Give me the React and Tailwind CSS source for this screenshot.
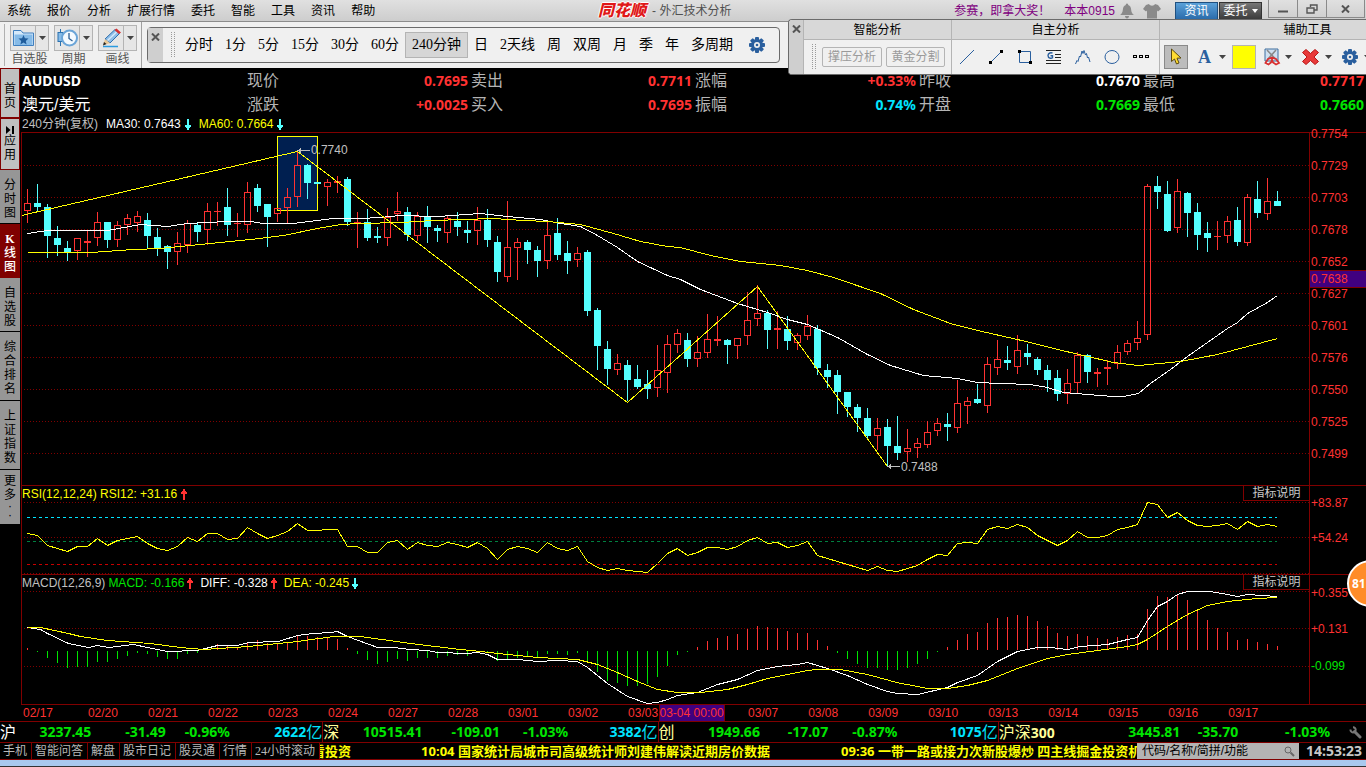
const MENU = ["系统", "报价", "分析", "扩展行情", "委托", "智能", "工具", "资讯", "帮助"];

const PERIODS = [
  "分时", "1分", "5分", "15分", "30分", "60分", "240分钟", "日",
  "2天线", "周", "双周", "月", "季", "年", "多周期",
];

const SIDE_TABS = [
  { label: "首页", className: "h-[50px] bg-[#c0c0c0] pt-1.5 text-black border border-[#800000]" },
  { label: "应用", icon: true, className: "h-[52px] bg-[#c0c0c0] text-black border border-[#800000]" },
  { label: "分时图", className: "h-[54px] bg-[#969696] pt-1 text-black border-b border-black" },
  { label: "K线图", className: "h-[54px] bg-[#800000] pt-1 text-white font-medium" },
  { label: "自选股", className: "h-[54px] bg-[#969696] pt-1 text-black border-b border-black" },
  { label: "综合排名", className: "h-[69px] bg-[#969696] pt-1 text-black border-b border-black" },
  { label: "上证指数", className: "h-[69px] bg-[#969696] pt-1 text-black border-b border-black" },
  { label: "更多··", className: "h-[54px] bg-[#969696] text-black" },
];

const QUOTES = [
  ["现价", "0.7695", "text-[#ff3232]"],
  ["卖出", "0.7711", "text-[#ff3232]"],
  ["涨幅", "+0.33%", "text-[#ff3232]"],
  ["昨收", "0.7670", "text-white"],
  ["最高", "0.7717", "text-[#ff3232]"],
  ["涨跌", "+0.0025", "text-[#ff3232]"],
  ["买入", "0.7695", "text-[#ff3232]"],
  ["振幅", "0.74%", "text-[#00e4ff]"],
  ["开盘", "0.7669", "text-[#00e600]"],
  ["最低", "0.7660", "text-[#00e600]"],
];

// [up, high, body top, body bottom, low], one entry every 10px
const CANDLES = [
  [1, 189, 203, 211, 223], [0, 184, 203, 207, 211], [0, 204, 207, 236, 258], [0, 226, 238, 245, 256],
  [0, 241, 248, 253, 261], [1, 238, 238, 251, 260], [1, 231, 241, 243, 257], [1, 212, 222, 238, 246],
  [0, 222, 222, 240, 248], [1, 221, 225, 240, 247], [1, 214, 218, 225, 235], [1, 211, 216, 223, 232],
  [0, 213, 220, 236, 248], [0, 228, 237, 248, 256], [0, 245, 246, 252, 269], [1, 232, 243, 252, 265],
  [1, 220, 223, 245, 253], [0, 222, 225, 232, 242], [1, 203, 211, 230, 245], [1, 202, 211, 212, 226],
  [0, 188, 207, 225, 236], [1, 213, 223, 224, 237], [1, 182, 192, 225, 233], [0, 184, 188, 206, 212],
  [0, 204, 204, 217, 247], [1, 208, 208, 214, 222], [1, 188, 197, 208, 223], [1, 150, 165, 197, 207],
  [0, 164, 165, 183, 199], [0, 182, 182, 184, 184], [1, 179, 182, 187, 206], [1, 176, 181, 183, 193],
  [0, 177, 179, 222, 226], [1, 212, 222, 223, 248], [0, 209, 222, 238, 241], [0, 227, 236, 238, 243],
  [1, 208, 217, 238, 246], [1, 192, 211, 214, 221], [0, 207, 212, 235, 241], [1, 212, 216, 236, 241],
  [0, 206, 217, 227, 243], [0, 225, 228, 231, 242], [1, 216, 218, 233, 243], [0, 212, 221, 227, 236],
  [0, 221, 230, 233, 243], [1, 207, 220, 231, 245], [0, 209, 220, 240, 247], [0, 236, 242, 272, 282],
  [1, 201, 247, 277, 282], [1, 238, 242, 248, 280], [0, 240, 242, 250, 264], [0, 246, 250, 261, 277],
  [1, 220, 235, 261, 269], [0, 218, 233, 255, 260], [0, 241, 253, 261, 274], [1, 247, 253, 260, 267],
  [0, 250, 252, 311, 316], [0, 308, 310, 346, 370], [0, 341, 349, 369, 385], [1, 354, 363, 370, 375],
  [0, 360, 365, 380, 401], [0, 365, 379, 387, 389], [0, 370, 384, 389, 399], [1, 345, 370, 388, 397],
  [1, 335, 344, 373, 393], [1, 329, 333, 345, 353], [0, 333, 340, 359, 367], [1, 336, 352, 359, 367],
  [1, 314, 339, 353, 358], [1, 316, 339, 341, 346], [0, 339, 340, 345, 364], [1, 338, 338, 346, 359],
  [1, 292, 320, 336, 345], [1, 285, 313, 319, 326], [0, 310, 313, 330, 349], [1, 311, 328, 330, 349],
  [0, 316, 329, 341, 350], [1, 333, 335, 343, 350], [1, 315, 326, 336, 340], [0, 325, 329, 368, 375],
  [0, 364, 370, 377, 388], [0, 370, 375, 392, 414], [0, 392, 392, 407, 417], [0, 404, 407, 418, 432],
  [0, 408, 418, 436, 440], [1, 418, 428, 436, 450], [0, 419, 427, 446, 466], [0, 416, 446, 453, 460],
  [1, 429, 448, 452, 462], [1, 438, 443, 448, 458], [1, 421, 432, 445, 448], [1, 418, 423, 431, 436],
  [0, 413, 424, 427, 441], [1, 380, 403, 428, 433], [1, 397, 401, 406, 424], [0, 384, 399, 403, 404],
  [1, 357, 364, 406, 413], [1, 340, 359, 368, 375], [0, 346, 360, 363, 370], [1, 335, 350, 367, 374],
  [0, 344, 353, 357, 365], [0, 357, 359, 370, 375], [0, 365, 370, 380, 392], [0, 370, 378, 394, 401],
  [1, 369, 383, 394, 404], [1, 352, 355, 383, 393], [0, 354, 355, 372, 383], [1, 368, 372, 374, 387],
  [1, 360, 367, 369, 385], [1, 345, 352, 364, 369], [1, 340, 343, 352, 355], [1, 321, 338, 343, 350],
  [1, 184, 186, 335, 340], [0, 176, 186, 192, 209], [0, 181, 194, 231, 232], [1, 179, 191, 228, 233],
  [0, 192, 193, 213, 237], [0, 203, 212, 235, 250], [0, 222, 233, 238, 252], [1, 221, 236, 237, 250],
  [1, 216, 221, 236, 243], [0, 207, 220, 242, 246], [1, 194, 197, 243, 246], [0, 181, 199, 213, 218],
  [1, 178, 201, 214, 220], [0, 191, 201, 206, 206],
];

const RSI = [
  533, 535, 545, 548, 551, 546, 546, 538, 545, 540, 538, 536, 543, 548, 550, 546, 537, 541, 533, 533, 539, 538,
  527, 533, 538, 535, 531, 523, 530, 530, 529, 529, 546, 546, 552, 552, 542, 540, 549, 542, 545, 546, 542, 544,
  547, 542, 548, 559, 549, 546, 548, 552, 542, 548, 550, 546, 561, 567, 570, 568, 570, 571, 572, 563, 553, 548,
  555, 552, 547, 547, 549, 546, 540, 537, 543, 542, 547, 545, 541, 555, 558, 561, 564, 567, 570, 566, 570, 571,
  568, 565, 559, 554, 555, 543, 542, 543, 529, 526, 528, 524, 527, 535, 540, 545, 540, 531, 537, 537, 535, 529,
  527, 524, 502, 504, 517, 512, 520, 525, 526, 525, 523, 529, 521, 526, 524, 526,
];

const MACD = [
  2, -1, -7, -12, -17, -16, -16, -11, -11, -8, -5, -2, -3, -6, -8, -8, -3, -2, 2, 6, 4, 3, 8, 10, 7, 7, 7, 14,
  14, 13, 13, 11, 2, -3, -9, -13, -11, -8, -10, -7, -7, -7, -5, -4, -5, -1, -2, -10, -8, -7, -6, -6, -3, -3, -4,
  -2, -11, -21, -30, -32, -35, -35, -33, -26, -15, -4, -1, 3, 9, 12, 14, 16, 21, 24, 23, 22, 19, 17, 17, 10, 4,
  -2, -8, -13, -17, -17, -19, -19, -17, -13, -8, -1, 3, 10, 16, 18, 27, 32, 33, 35, 34, 29, 24, 17, 14, 16, 14,
  12, 11, 13, 15, 16, 41, 54, 53, 55, 50, 40, 30, 22, 18, 10, 11, 8, 6, 4,
];

const MA30 =
  "27,233 47,230 107,230 140,224 167,226 187,223 227,221 250,221 263,223 293,223 333,218 360,218 380,217 400,215 437,216 480,213 507,216 540,219 560,223 580,226 597,235 617,247 637,261 667,275 680,279 700,289 737,303 767,312 787,319 807,324 837,337 867,354 890,365 923,375 957,378 977,382 1000,383 1030,384 1047,387 1063,392 1087,394 1113,396 1123,396 1138,393 1150,383 1170,369 1187,356 1227,328 1237,322 1247,313 1267,302 1277,295";
const MA60 =
  "27,252 90,252 133,249 160,248 200,244 250,239 283,235 317,228 340,224 360,223 400,222 433,220 493,218 523,220 547,221 580,224 613,233 640,241 667,246 680,247 710,255 740,261 780,265 807,270 833,277 880,293 913,309 950,323 977,330 1017,339 1070,352 1113,362 1138,365 1180,361 1217,354 1247,346 1277,338";
const DIFF =
  "27,627 40,629 47,633 68,643 88,647 97,645 108,647 133,644 147,647 167,651 197,650 217,645 237,645 248,642 278,641 297,635 313,633 330,632 337,631 347,636 377,647 393,647 410,649 427,650 437,652 467,653 477,652 487,654 497,659 517,659 537,661 557,660 577,661 587,667 607,683 627,696 647,703 657,702 667,699 677,695 697,692 717,684 737,679 757,670 777,666 797,664 807,662 827,668 847,675 867,684 887,691 897,693 917,694 947,687 957,682 977,675 997,661 1017,651 1027,649 1037,647 1050,647 1067,649 1080,646 1107,644 1127,639 1137,637 1147,620 1157,606 1167,601 1177,594 1187,591 1210,591 1227,594 1237,596 1247,594 1277,596";
const DEA =
  "27,627 40,627 68,633 80,636 107,640 150,643 180,647 203,649 248,646 297,641 333,636 360,636 410,643 460,649 480,651 507,654 537,657 577,659 597,664 617,672 637,681 657,689 677,692 700,692 727,689 747,684 767,678 787,674 807,670 817,669 840,669 867,674 900,683 907,684 927,688 947,688 967,685 987,680 1017,668 1047,658 1067,654 1097,650 1127,646 1137,644 1147,639 1167,626 1187,614 1207,605 1227,601 1257,598 1277,597";

const PRICE_AXIS = [
  "0.7754", "0.7729", "0.7703", "0.7678", "0.7652", "0.7627",
  "0.7601", "0.7576", "0.7550", "0.7525", "0.7499",
];

// the gap is the day that sits behind the cursor date
const DATES = [
  "02/20", "02/21", "02/22", "02/23", "02/24", "02/27", "02/28", "03/01", "03/02", "03/03",
  "", "03/07", "03/08", "03/09", "03/10", "03/13", "03/14", "03/15", "03/16", "03/17",
];

const INDEXES = [
  {
    name: "沪", color: "text-white", box: "flex-[323] border-r",
    cells: [["3237.45", "flex-[91]"], ["-31.49", "flex-[74]"], ["-0.96%", "flex-[64]"]],
    amount: "2622", amountBox: "flex-[92]",
  },
  {
    name: "深", color: "text-[#ffff99]", box: "flex-[335] border-r",
    cells: [["10515.41", "flex-[99]"], ["-109.01", "flex-[77]"], ["-1.03%", "flex-[68]"]],
    amount: "3382", amountBox: "flex-[89]",
  },
  {
    name: "创", color: "text-[#ffff99]", box: "flex-[340] border-r",
    cells: [["1949.66", "flex-[101]"], ["-17.07", "flex-[68]"], ["-0.87%", "flex-[69]"]],
    amount: "1075", amountBox: "flex-[100]",
  },
  {
    name: "沪深300", color: "text-[#ffff99]", box: "flex-[332]",
    cells: [["3445.81", "flex-[182]"], ["-35.70", "flex-[58]"], ["-1.03%", "flex-[92]"]],
  },
];

const BOTTOM_LINKS = ["手机", "智能问答", "解盘", "股市日记", "股灵通", "行情", "24小时滚动"];

const xAt = (i) => 27 + i * 10;

function Arrow({ up }) {
  return (
    <svg width="6" height="11" viewBox="0 0 6 11" className="shrink-0" shapeRendering="crispEdges">
      {up ? (
        <path d="M2 11V5H0V3H1V2H2V0H4V2H5V3H6V5H4V11Z" fill="#ff3232" />
      ) : (
        <path d="M2 0V6H0V8H1V9H2V11H4V9H5V8H6V6H4V0Z" fill="#54ffff" />
      )}
    </svg>
  );
}

function Gear() {
  return (
    <svg width="16" height="16" viewBox="0 0 16 16" className="shrink-0">
      <g fill="#2a5f9e">
        <circle cx="8" cy="8" r="6" />
        {[0, 45, 90, 135].map((a) => (
          <rect key={a} x="6" y="0" width="4" height="16" rx="1" transform={`rotate(${a} 8 8)`} />
        ))}
      </g>
      <circle cx="8" cy="8" r="3" fill="#f0f0f0" />
      <circle cx="8" cy="8" r="1.3" fill="#2a5f9e" />
    </svg>
  );
}

function Caret() {
  return (
    <svg width="7" height="4" viewBox="0 0 7 4" className="shrink-0">
      <path d="M0 0H7L3.5 4Z" fill="#444" />
    </svg>
  );
}

function CloseMark() {
  return (
    <svg width="9" height="8" viewBox="0 0 9 8">
      <path d="M1 0.5L8 7.5M8 0.5L1 7.5" stroke="#555" strokeWidth="2" />
    </svg>
  );
}

function Handle() {
  return (
    <svg width="4" height="26" viewBox="0 0 4 26" className="shrink-0" shapeRendering="crispEdges">
      <path d="M0.5 0V26M3.5 0V26" stroke="#9a9a9a" strokeDasharray="1 1" />
    </svg>
  );
}

function MenuBar() {
  return (
    <header className="flex h-[22px] items-center border-b border-[#8c8c8c] bg-linear-to-b from-[#e0e0e0] to-[#cdcdcd] pl-[7px] text-xs text-black">
      <nav className="flex gap-4">
        {MENU.map((m) => (
          <button key={m} type="button">{m}</button>
        ))}
      </nav>
      <div className="mx-auto flex items-center gap-1 text-[#505050]">
        <span className="text-base leading-5 font-black text-[#e01818] italic [text-shadow:1px_0_#fff,-1px_0_#fff,0_1px_#fff,0_-1px_#fff]">
          同花顺
        </span>
        <span className="ml-0.5">- 外汇技术分析</span>
      </div>
      <div className="flex h-full items-center text-[#800080]">
        <a href="#match">参赛，即拿大奖！</a>
        <a href="#user" className="ml-3.5">本本0915</a>
        <button type="button" aria-label="消息" className="ml-1">
          <svg width="16" height="16" viewBox="0 0 16 16" fill="#8a8a8a">
            <path d="M8 0.5C9 0.5 9.2 1.4 9.2 2C11.3 2.6 12 4.5 12.2 7C12.4 9.6 13.5 11 15 12H1C2.5 11 3.6 9.6 3.8 7C4 4.5 4.7 2.6 6.8 2C6.8 1.4 7 0.5 8 0.5ZM6 13H10C10 16.3 6 16.3 6 13Z" />
          </svg>
        </button>
        <button type="button" aria-label="皮肤" className="mr-3.5 ml-2">
          <svg width="18" height="16" viewBox="0 0 18 16" fill="#8a8a8a">
            <path d="M6 1C7 3.2 11 3.2 12 1L15 2L18 6L15 8.5L14 7.5V15.5H4V7.5L3 8.5L0 6L3 2Z" />
          </svg>
        </button>
        <button type="button" className="h-[18px] w-[43px] border border-[#1f5080] bg-linear-to-b from-[#5aa0d8] to-[#2b6cab] text-white">
          资讯
        </button>
        <button type="button" className="ml-px flex h-[18px] w-[43px] items-center justify-center gap-1 border border-[#333] bg-linear-to-b from-[#777] to-[#3c3c3c] text-white">
          委托
          <svg width="6" height="4" viewBox="0 0 6 4"><path d="M0 0H6L3 4Z" fill="#fff" /></svg>
        </button>
        <div className="mr-px ml-1.5 flex h-[18px] self-start border border-t-0 border-[#8a8a8a]">
          <button type="button" aria-label="最小化" className="flex w-[29px] items-center justify-center border-r border-[#8a8a8a]">
            <svg width="10" height="8" viewBox="0 0 10 8"><path d="M0 6.5H10" stroke="#555" strokeWidth="2" /></svg>
          </button>
          <button type="button" aria-label="还原" className="flex w-[29px] items-center justify-center border-r border-[#8a8a8a]">
            <svg width="12" height="10" viewBox="0 0 12 10" fill="none" stroke="#555">
              <path d="M4.5 3V1H11V6H8.5M1 4H8V9H1Z" strokeWidth="1.4" />
            </svg>
          </button>
          <button type="button" aria-label="关闭" className="flex w-[37px] items-center justify-center"><CloseMark /></button>
        </div>
      </div>
    </header>
  );
}

function BigTool({ label, children }) {
  return (
    <div className="flex w-[39px] flex-col items-center text-xs leading-4 text-[#555]">
      <div className="flex h-[26px] w-full border border-[#b4b4b4] bg-[#e6e6e6]">
        <button type="button" aria-label={label} className="flex flex-1 items-center justify-center border-r border-[#b4b4b4]">
          {children}
        </button>
        <button type="button" aria-label={`${label}菜单`} className="flex w-3 items-center justify-center"><Caret /></button>
      </div>
      <span>{label}</span>
    </div>
  );
}

function ToolBar() {
  return (
    <div className="flex h-[46px] bg-[#f0f0f0]">
      <div className="flex gap-[5px] border-r border-[#a0a0a0] pt-[3px] pr-1 pl-1">
        <span className="-mt-px mb-0.5 w-px border-r border-[#b0b0b0]" />
        <BigTool label="自选股">
          <svg width="21" height="18" viewBox="0 0 21 18">
            <path d="M0.5 16.5V1.5H8L10 4H20.5V16.5Z" fill="#d5e9fa" stroke="#3f7fbf" />
            <path d="M1.5 5.5H19.5V16H1.5Z" fill="#86bbe8" />
            <path d="M10.5 6L11.9 9.3L15.5 9.6L12.8 11.9L13.6 15.4L10.5 13.5L7.4 15.4L8.2 11.9L5.5 9.6L9.1 9.3Z" fill="#1f5c9c" />
          </svg>
        </BigTool>
        <BigTool label="周期">
          <svg width="21" height="20" viewBox="0 0 21 20">
            <path d="M3.5 1V18" stroke="#2b72b0" />
            <rect x="1" y="4.5" width="5" height="9" fill="#86bbe8" stroke="#2b72b0" />
            <circle cx="12.5" cy="10" r="7.5" fill="#f4faff" stroke="#6ba5d8" strokeWidth="2" />
            <path d="M12 5V10.5L15.5 13" fill="none" stroke="#2b5f95" strokeWidth="1.3" />
          </svg>
        </BigTool>
        <BigTool label="画线">
          <svg width="21" height="20" viewBox="0 0 21 20">
            <path d="M2 18.5H17" stroke="#2b9be0" strokeWidth="1.5" />
            <path d="M4 11L14 1.5L18.5 5.5L9 15Z" fill="#8dbde8" stroke="#2f6fae" />
            <path d="M6.5 12.5L15.5 4" stroke="#d5e9fa" strokeWidth="1.5" />
            <path d="M13.5 2L15.5 0.5L20 4.5L18 6Z" fill="#d83030" />
            <path d="M2 17.5L4 11L9 15Z" fill="#e8c898" />
            <path d="M2 17.5L3 14L5.5 16Z" fill="#222" />
          </svg>
        </BigTool>
      </div>
      <div className="mt-[5px] ml-[5px] flex h-9 w-[633px] rounded-sm border border-[#6b6b6b]">
        <button type="button" aria-label="关闭工具条" className="flex w-[15px] justify-center bg-[#cfcfcf] pt-[5px]"><CloseMark /></button>
        <div className="flex flex-1 items-center pl-2 font-['Liberation_Serif','Noto_Sans_CJK_SC',serif] text-sm text-black">
          <Handle />
          <div className="ml-1 flex items-center">
            {PERIODS.map((p) => (
              <button
                key={p}
                type="button"
                className={
                  p === "240分钟"
                    ? "h-[26px] border border-[#b4b4b4] bg-[#d6d6d6] px-[6px]"
                    : "h-[26px] px-[6px]"
                }
              >
                {p}
              </button>
            ))}
          </div>
          <button type="button" aria-label="设置" className="ml-2.5"><Gear /></button>
        </div>
      </div>
    </div>
  );
}

function DrawTool({ label, children }) {
  return (
    <button type="button" aria-label={label} className="flex w-[29px] shrink-0 justify-center">
      <svg width="16" height="16" viewBox="0 0 16 16" fill="none" stroke="#2a5f9e">
        {children}
      </svg>
    </button>
  );
}

function DrawPanel() {
  return (
    <div className="absolute top-[19px] right-0 flex h-14 w-[578px] overflow-hidden rounded-l-sm border border-r-0 border-[#6b6b6b] bg-[#f0f0f0] text-xs text-black">
      <button type="button" aria-label="关闭画线工具" className="flex w-[15px] shrink-0 justify-center border-r border-[#b4b4b4] bg-[#cfcfcf] pt-[5px]">
        <CloseMark />
      </button>
      <section className="w-[148px] shrink-0 border-r border-[#b4b4b4]">
        <h2 className="h-5 border-b border-[#b4b4b4] bg-[#d8d8d8] text-center leading-5">智能分析</h2>
        <div className="flex h-[34px] items-center gap-1 pl-2">
          <Handle />
          <button type="button" className="ml-0.5 h-5 w-[60px] rounded-xs border border-[#b4b4b4] text-[#9a9a9a]">撑压分析</button>
          <button type="button" className="h-5 w-[59px] rounded-xs border border-[#b4b4b4] text-[#9a9a9a]">黄金分割</button>
        </div>
      </section>
      <section className="w-[208px] shrink-0 border-r border-[#b4b4b4]">
        <h2 className="h-5 border-b border-[#b4b4b4] bg-[#d8d8d8] text-center leading-5">自主分析</h2>
        <div className="flex h-[34px] items-center">
          <DrawTool label="直线"><path d="M1 15L15 1" /></DrawTool>
          <DrawTool label="线段">
            <path d="M2.5 13.5L13.5 2.5" />
            <path d="M1 12H4V15H1ZM12 1H15V4H12Z" fill="#000" stroke="none" />
          </DrawTool>
          <DrawTool label="矩形">
            <path d="M2.5 2.5H13.5V13.5H2.5Z" />
            <path d="M1 1H4V4H1ZM12 12H15V15H12Z" fill="#000" stroke="none" />
          </DrawTool>
          <DrawTool label="黄金线">
            <path d="M0 1.5H15M9 5.5H15M9 8.5H15M0 11.5H15M0 14.5H15" stroke="#222" shapeRendering="crispEdges" />
            <path d="M6.5 4.2C5.5 3.4 2 3.6 2 6.6C2 9.6 5.5 9.6 6.5 8.8V6.8H4.5" strokeWidth="1.4" />
          </DrawTool>
          <DrawTool label="波浪">
            <path d="M0.5 15L2 11.5L3 12.5L4.5 7L5.5 8L7 2L8 4.5L9 1.5L10.5 6L11.5 4.5L12.5 9L13.5 8L15 13" />
          </DrawTool>
          <DrawTool label="圆"><ellipse cx="8" cy="8" rx="7" ry="6.5" /></DrawTool>
          <DrawTool label="更多">
            <path d="M0 6H4V9H0ZM6 6H10V9H6ZM12 6H16V9H12Z" fill="#000" stroke="none" shapeRendering="crispEdges" />
            <path d="M1 7H3V8H1ZM7 7H9V8H7ZM13 7H15V8H13Z" fill="#e8e8e8" stroke="none" shapeRendering="crispEdges" />
          </DrawTool>
        </div>
      </section>
      <section className="w-[295px] shrink-0">
        <h2 className="h-5 border-b border-[#b4b4b4] bg-[#d8d8d8] text-center leading-5">辅助工具</h2>
        <div className="flex h-[34px] items-center pl-1">
          <button type="button" aria-label="选择" className="flex size-6 items-center justify-center border border-[#8a8a8a] bg-[#bcbcbc]">
            <svg width="12" height="18" viewBox="0 0 12 18">
              <path d="M1.5 1V13.5L4.5 11L6.5 16L9 15L7 10.2L11 10Z" fill="#ffdc32" stroke="#5a4a10" />
            </svg>
          </button>
          <button type="button" aria-label="文字" className="ml-2.5 font-['Liberation_Serif',serif] text-lg leading-5 font-bold text-[#2a5f9e]">A</button>
          <span className="ml-2"><Caret /></span>
          <button type="button" aria-label="颜色" className="ml-1.5 size-6 border border-[#b4b4b4] bg-[#ffff00]" />
          <button type="button" aria-label="剪切" className="ml-2">
            <svg width="17" height="18" viewBox="0 0 17 18" fill="none">
              <path d="M1 1H14V13H1Z" fill="#cfe0f0" stroke="#3f6f9f" />
              <path d="M3 2L11.5 11M12 2L4 11" stroke="#888" strokeWidth="1.5" />
              <path d="M8 9.5L4 11L1.5 15L4.5 16.5L7 14.5L8 11.5L9 14.5L12 16.5L15 15L12 11Z" stroke="#d83030" strokeWidth="1.8" />
            </svg>
          </button>
          <span className="ml-1"><Caret /></span>
          <button type="button" aria-label="删除" className="ml-2.5">
            <svg width="17" height="16" viewBox="0 0 17 16">
              <path d="M4 0.5L8.5 4.5L13 0.5L16.5 3.5L12 8L16.5 12.5L13 15.5L8.5 11.5L4 15.5L0.5 12.5L5 8L0.5 3.5Z" fill="#e83a3a" stroke="#b81818" />
            </svg>
          </button>
          <span className="ml-1.5"><Caret /></span>
          <button type="button" aria-label="工具设置" className="ml-2.5"><Gear /></button>
          <span className="ml-1.5"><Caret /></span>
        </div>
      </section>
    </div>
  );
}

function SideBar() {
  return (
    <nav className="w-[21px] shrink-0 bg-black pr-px">
      {SIDE_TABS.map((t) => (
        <button
          key={t.label}
          type="button"
          className={`flex w-full flex-col items-center justify-center text-xs leading-[14px] ${t.className}`}
        >
          {t.icon && (
            <svg width="8" height="8" viewBox="0 0 8 8"><path d="M0 0L4.5 4L0 8ZM6 0H8V8H6Z" /></svg>
          )}
          {[...t.label].map((c, i) => (
            <span
              key={i}
              className={c === "·" ? "leading-[9px]" : c === "K" ? "font-['Liberation_Serif',serif] font-bold" : ""}
            >
              {c}
            </span>
          ))}
        </button>
      ))}
    </nav>
  );
}

function QuoteHeader() {
  const cell = ([label, value, color]) => (
    <div key={label} className="flex justify-between pr-0.5 pl-px">
      <span className="text-base leading-6 text-[#b4b4b4]">{label}</span>
      <span className={`font-['Noto_Sans',sans-serif] text-sm leading-6 font-bold ${color}`}>{value}</span>
    </div>
  );
  return (
    <div className="grid grid-cols-6 pt-px pl-px text-white">
      <div className="font-['Noto_Sans',sans-serif] text-sm leading-6 font-bold">AUDUSD</div>
      {QUOTES.slice(0, 5).map(cell)}
      <div className="text-base leading-6">澳元/美元</div>
      {QUOTES.slice(5).map(cell)}
    </div>
  );
}

function Grid({ rows }) {
  return rows.map((y) => (
    <path key={y} d={`M24 ${y}.5H1309`} stroke="#800000" strokeDasharray="1 2" />
  ));
}

function Line({ points, color }) {
  return <polyline points={points} fill="none" stroke={color} transform="translate(0.5 0.5)" />;
}

function ChartPanel({ box, viewBox, axis, children, overlay }) {
  return (
    <div className={`flex border-t border-[#800000] ${box}`}>
      <div className="relative min-w-0 flex-1 border-r border-l border-[#800000]">
        <svg className="block size-full" viewBox={viewBox} preserveAspectRatio="none" shapeRendering="crispEdges">
          {children}
        </svg>
        {overlay}
      </div>
      <div className="relative w-14 shrink-0 pl-px text-[#ff3232]">{axis}</div>
    </div>
  );
}

function HelpButton() {
  return (
    <button type="button" className="absolute top-0 right-0 h-[15px] w-[66px] border-b border-l border-[#800000] bg-black text-xs leading-[14px] text-[#c8c8c8]">
      指标说明
    </button>
  );
}

function PriceChart() {
  return (
    <ChartPanel
      box="h-[353px]"
      viewBox="22 133 1287 352"
      axis={
        <>
          <div className="-mt-4">
            {PRICE_AXIS.map((p) => (
              <div key={p} className="h-8 leading-[34px]">{p}</div>
            ))}
          </div>
          <div className="absolute top-[137px] left-0 h-[18px] w-full border-y border-[#800000] bg-[#400080] pl-px leading-4">
            0.7638
          </div>
        </>
      }
      overlay={
        <>
          <span className="absolute top-[9px] left-[22.45%] leading-4 text-[#c0c0c0]">0.7740</span>
          <span className="absolute top-[326px] left-[68.3%] leading-4 text-[#c0c0c0]">0.7488</span>
        </>
      }
    >
      <Grid rows={[165, 197, 229, 261, 293, 325, 357, 389, 421, 453]} />
      <rect x="277.5" y="136.5" width="40" height="74" fill="#001f50" stroke="#ffff00" />
      {CANDLES.map(([up, high, top, bottom, low], i) => {
        const x = xAt(i);
        if (!up) {
          return (
            <g key={i} fill="#54ffff">
              <rect x={x} y={high} width="1" height={low - high} />
              <rect x={x - 3} y={top} width="7" height={bottom - top} />
            </g>
          );
        }
        return (
          <g key={i} fill="#ff3232">
            <rect x={x} y={high} width="1" height={top - high} />
            <rect x={x} y={bottom} width="1" height={low - bottom} />
            {bottom - top < 3 ? (
              <rect x={x - 3} y={top} width="7" height={bottom - top} />
            ) : (
              <rect x={x - 2.5} y={top + 0.5} width="6" height={bottom - top - 1} fill="none" stroke="#ff3232" />
            )}
          </g>
        );
      })}
      <Line points={MA30} color="#ffffff" />
      <Line points={MA60} color="#ffff00" />
      <Line points="21,215 297,151 627,402 757,286 887,466" color="#ffff00" />
      <path d="M298 150.5H310M888 466.5H900" stroke="#c0c0c0" />
      <path d="M297 150.5L301 148V153ZM887 466.5L891 464V469Z" fill="#c0c0c0" />
    </ChartPanel>
  );
}

function RsiChart() {
  return (
    <ChartPanel
      box="h-[89px]"
      viewBox="22 486 1287 88"
      axis={
        <>
          <div className="leading-[35px]">+83.87</div>
          <div className="leading-[35px]">+54.24</div>
        </>
      }
      overlay={
        <>
          <div className="absolute top-0 left-0 flex items-center gap-1 leading-4 text-[#ffff00]">
            RSI(12,12,24) RSI12: +31.16 <Arrow up />
          </div>
          <HelpButton />
        </>
      }
    >
      <Grid rows={[502, 537, 573]} />
      <path d="M27 517.5H1277" stroke="#00e4ff" strokeDasharray="3 3" />
      <path d="M27 541.5H1277" stroke="#008040" strokeDasharray="3 3" />
      <path d="M27 564.5H1277" stroke="#c80000" strokeDasharray="3 3" />
      <Line points={RSI.map((y, i) => `${xAt(i)},${y}`).join(" ")} color="#ffff00" />
    </ChartPanel>
  );
}

function MacdChart() {
  return (
    <ChartPanel
      box="h-[131px] border-b"
      viewBox="22 575 1287 129"
      axis={
        <>
          <div className="leading-[36px]">+0.355</div>
          <div className="leading-[37px]">+0.131</div>
          <div className="leading-[37px] text-[#00e600]">-0.099</div>
        </>
      }
      overlay={
        <>
          <div className="absolute top-0 left-0 flex items-center gap-[3px] leading-4">
            <span className="text-[#c0c0c0]">MACD(12,26,9)</span>
            <span className="text-[#00e600]">MACD: -0.166</span>
            <Arrow up />
            <span className="ml-1 text-white">DIFF: -0.328</span>
            <Arrow up />
            <span className="ml-1 text-[#ffff00]">DEA: -0.245</span>
            <Arrow />
          </div>
          <HelpButton />
        </>
      }
    >
      <Grid rows={[591, 628, 666]} />
      {MACD.map((v, i) => (
        <rect
          key={i}
          x={xAt(i)}
          y={v > 0 ? 650 - v : 651}
          width="1"
          height={Math.abs(v)}
          fill={v > 0 ? "#ff3232" : "#00e600"}
        />
      ))}
      <Line points={DIFF} color="#ffffff" />
      <Line points={DEA} color="#ffff00" />
    </ChartPanel>
  );
}

function DateAxis() {
  return (
    <div className="relative flex h-4 pr-14 leading-4 text-[#ff3232]">
      <span className="flex-[65] basis-0 pl-0.5">02/17</span>
      {DATES.map((d, i) => (
        <span key={i} className="flex-[60] basis-0 pl-px">{d}</span>
      ))}
      <span className="flex-[23] basis-0" />
      <span className="absolute top-0 left-[47.4%] h-4 border-x border-[#800000] bg-[#400080]">
        03-04 00:00
      </span>
    </div>
  );
}

function IndexBar() {
  return (
    <div className="flex h-[21px] border-t border-[#800000] font-['Noto_Sans','Noto_Sans_CJK_SC',sans-serif] text-sm leading-5 font-bold text-[#00e600]">
      {INDEXES.map((x) => (
        <div key={x.name} className={`flex border-[#800000] ${x.box}`}>
          {x.cells.map(([value, box], i) => (
            <span key={value} className={`flex justify-end ${box}`}>
              {i === 0 && (
                <span className={`mr-auto ${x.color}`}>
                  <span className="text-base leading-5 font-normal">{x.name.replace("300", "")}</span>
                  {x.name.includes("300") && "300"}
                </span>
              )}
              {value}
            </span>
          ))}
          {x.amount && (
            <span className={`flex justify-end text-[#00e4ff] ${x.amountBox}`}>
              {x.amount}
              <span className="text-base leading-5 font-normal">亿</span>
            </span>
          )}
        </div>
      ))}
      <button type="button" aria-label="设置指数" className="flex w-9 items-center justify-end pr-1">
        <svg width="13" height="13" viewBox="0 0 13 13" fill="none" stroke="#777">
          <path d="M5.5 5.5L11 11" strokeWidth="3" strokeLinecap="round" />
          <path d="M1.5 3.5A2.6 2.6 0 1 0 4 1.2" strokeWidth="2" />
        </svg>
      </button>
    </div>
  );
}

function BottomBar() {
  return (
    <div className="flex h-[18px] border-y border-[#800000] bg-black text-xs leading-4">
      <nav className="flex shrink-0 font-['Liberation_Serif','Noto_Sans_CJK_SC',serif] text-[#b8b8b8]">
        {BOTTOM_LINKS.map((l) => (
          <a key={l} href="#" className="border-r border-[#800000] pr-1 pl-[3px]">{l}</a>
        ))}
      </nav>
      <div className="flex min-w-0 flex-1 overflow-hidden font-['Noto_Sans','Noto_Sans_CJK_SC',sans-serif] text-[13px] font-bold whitespace-nowrap text-[#ffff00]">
        <span className="-ml-2 w-[109px] shrink-0">看投资</span>
        <span className="w-[420px] shrink-0">10:04 国家统计局城市司高级统计师刘建伟解读近期房价数据</span>
        <span>09:36 一带一路或接力次新股爆炒 四主线掘金投资机</span>
      </div>
      <label className="flex w-[162px] shrink-0 items-center bg-[#b4b4b4] pr-1 pl-[5px]">
        <input
          type="text"
          aria-label="代码/名称/简拼/功能"
          placeholder="代码/名称/简拼/功能"
          className="w-full min-w-0 leading-4 outline-none placeholder:text-black"
        />
        <svg width="11" height="11" viewBox="0 0 11 11" fill="none" stroke="#666" className="shrink-0">
          <circle cx="4" cy="4" r="3" />
          <path d="M6.5 6.5L10 10" strokeWidth="2" />
        </svg>
      </label>
      <time className="w-[67px] shrink-0 pr-1 text-right font-['Noto_Sans',sans-serif] text-sm leading-4 font-bold text-[#c8c8c8]">
        14:53:23
      </time>
    </div>
  );
}

export default function App() {
  return (
    <div className="relative flex min-h-screen flex-col overflow-hidden bg-black font-['Liberation_Sans','Noto_Sans_CJK_SC',sans-serif] text-xs">
      <MenuBar />
      <ToolBar />
      <main className="flex">
        <SideBar />
        <div className="min-w-0 flex-1">
          <QuoteHeader />
          <div className="flex h-[15px] items-center gap-1 pl-px leading-[15px] text-white">
            <span className="mr-1 text-[#c0c0c0]">240分钟(复权)</span>
            MA30: 0.7643
            <Arrow />
            <span className="ml-1 text-[#ffff00]">MA60: 0.7664</span>
            <Arrow />
          </div>
          <PriceChart />
          <RsiChart />
          <MacdChart />
          <DateAxis />
        </div>
      </main>
      <IndexBar />
      <BottomBar />
      <div className="min-h-1.5 flex-1 border-b border-[#333] bg-[#a9c9ee]" />
      <DrawPanel />
      <div className="absolute top-[560px] -right-7 size-[47px] rounded-full border-2 border-white bg-[#ff8c28] pl-[3px] font-['Noto_Sans',sans-serif] text-xs leading-[43px] font-bold text-white">
        81
      </div>
    </div>
  );
}
